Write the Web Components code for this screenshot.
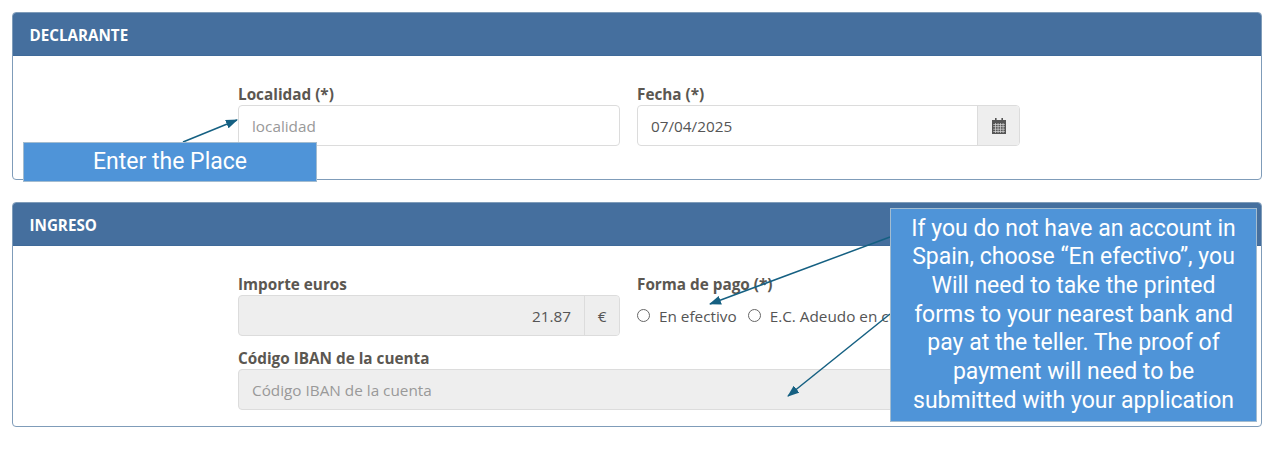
<!DOCTYPE html>
<html lang="es"><head><meta charset="utf-8"><title>Declarante</title>
<style>
html,body{margin:0;background:#fff}
body{font-family:"Open Sans","Liberation Sans",sans-serif;color:#555;position:relative;height:474px;overflow:hidden}
main{display:flex;flex-direction:column;gap:22px;padding:12px 18px 0 12px}
</style></head><body>
<main>
<form-panel title-text="DECLARANTE">
  <form-grid>
    <form-field label="Localidad (*)"><text-box placeholder="localidad"></text-box></form-field>
    <form-field label="Fecha (*)"><text-box value="07/04/2025" addon="calendar"></text-box></form-field>
  </form-grid>
</form-panel>
<form-panel title-text="INGRESO" tall>
  <form-grid>
    <form-field label="Importe euros"><text-box value="21.87" addon="€" disabled right></text-box></form-field>
    <form-field label="Forma de pago (*)"><radio-row><radio-opt>En efectivo</radio-opt><radio-opt>E.C. Adeudo en cuenta</radio-opt></radio-row></form-field>
    <form-field label="Código IBAN de la cuenta" wide><text-box placeholder="Código IBAN de la cuenta" disabled></text-box></form-field>
  </form-grid>
</form-panel>
</main>
<arrow-layer></arrow-layer>
<call-out style="left:23px;top:142px;width:294px;height:40px">Enter the Place</call-out>
<call-out style="left:890px;top:208px;width:367px;height:214px">If you do not have an account in<br>Spain, choose “En efectivo”, you<br>Will need to take the printed<br>forms to your nearest bank and<br>pay at the teller. The proof of<br>payment will need to be<br>submitted with your application</call-out>
<script>
function def(name,css,html,init){
  customElements.define(name,class extends HTMLElement{
    connectedCallback(){
      if(this.shadowRoot)return;
      const r=this.attachShadow({mode:'open'});
      r.innerHTML='<style>'+css+'</style>'+(typeof html==='function'?html(this):html);
      if(init)init(this,r);
    }
  });
}
def('form-panel',`
  :host{display:block;border:1px solid #7f9cb9;border-radius:4px;overflow:hidden;background:#fff}
  header{background:#456f9e;color:#fff;font:700 15.200px/20px "Open Sans",sans-serif;height:43px;box-sizing:border-box;padding:12px 16.500px;border-bottom:1px solid #3f6a99}
  .b{padding:29px 0 33px 225px}
  :host([tall]) .b{padding-bottom:16px}
`,h=>`<header>${h.getAttribute('title-text')}</header><div class="b"><slot></slot></div>`);
def('form-grid',`:host{display:grid;grid-template-columns:382px 383px;column-gap:17px;row-gap:13px}`,'<slot></slot>');
def('form-field',`
  :host{display:block}
  :host([wide]){grid-column:1 / -1}
  label{display:block;font:700 15.300px/18px "Open Sans",sans-serif;color:#5b5751;height:20px}
`,h=>`<label>${h.getAttribute('label')}</label><slot></slot>`);
const cal=`<svg width="14" height="16" viewBox="0 0 14 16" aria-hidden="true"><path fill="#555" d="M3 0h1.6v2H9.400V0H11v2h3v14H0V2h3z"/><g fill="#d8d8d8"><rect x="1.200" y="6" width="11.600" height=".7"/><rect x="1.200" y="8.400" width="11.600" height=".7"/><rect x="1.200" y="10.800" width="11.600" height=".7"/><rect x="1.200" y="13.200" width="11.600" height=".7"/><rect x="3.200" y="5" width=".7" height="10"/><rect x="5.700" y="5" width=".7" height="10"/><rect x="8.200" y="5" width=".7" height="10"/><rect x="10.700" y="5" width=".7" height="10"/></g></svg>`;
def('text-box',`
  :host{display:flex;height:41px;box-sizing:border-box;border:1px solid #dcdcdc;border-radius:4px;background:#fff;font:15.300px/20px "Open Sans",sans-serif;color:#555;overflow:hidden}
  :host([disabled]){background:#eee}
  .v{flex:1;display:flex;align-items:center;padding:0 13px 0 13px}
  :host([right]) .v{justify-content:flex-end}
  .p{color:#999}
  .a{display:flex;align-items:center;justify-content:center;background:#eee;border-left:1px solid #dcdcdc;color:#555}
  .a.cal{width:41px}.a.txt{width:34px}
`,h=>{
  const ph=h.getAttribute('placeholder'),v=h.getAttribute('value'),a=h.getAttribute('addon');
  return `<div class="v">${ph?`<span class="p">${ph}</span>`:`<span>${v}</span>`}</div>`+
   (a==='calendar'?`<div class="a cal">${cal}</div>`:a?`<div class="a txt">${a}</div>`:'');
});
def('radio-row',`:host{display:flex;gap:11px;height:41px;align-items:center;white-space:nowrap}`,'<slot></slot>');
def('radio-opt',`
  :host{display:inline-flex;align-items:center;gap:9px;font:15.300px/20px "Open Sans",sans-serif;color:#555}
  i{width:13px;height:13px;box-sizing:border-box;border:1.300px solid #666;border-radius:50%;background:#fff}
`,'<i></i><span><slot></slot></span>');
def('call-out',`
  :host{position:absolute;box-sizing:border-box;display:flex;align-items:center;justify-content:center;text-align:center;background:#4f94d8;border:1px solid #a3bcd0;color:#fff;font:23px/28.700px Roboto,"Liberation Sans",sans-serif;padding:0 4px;white-space:nowrap}
  div{width:100%}
`,'<div><slot></slot></div>');
def('arrow-layer',`
  :host{position:absolute;left:0;top:0;width:1280px;height:474px;pointer-events:none}
  svg{display:block}
`,`<svg width="1280" height="474" viewBox="0 0 1280 474" aria-hidden="true">
  <defs><marker id="h" markerUnits="userSpaceOnUse" markerWidth="12" markerHeight="9" refX="11" refY="4.500" orient="auto"><path d="M0 0L12 4.500L0 9z" fill="#156082"/></marker></defs>
  <g stroke="#156082" stroke-width="1.500" fill="none">
    <line x1="183" y1="142" x2="237" y2="120" marker-end="url(#h)"/>
    <line x1="890" y1="237" x2="710" y2="304" marker-end="url(#h)"/>
    <line x1="890" y1="314" x2="788" y2="396" marker-end="url(#h)"/>
  </g></svg>`);
</script>
</body></html>
